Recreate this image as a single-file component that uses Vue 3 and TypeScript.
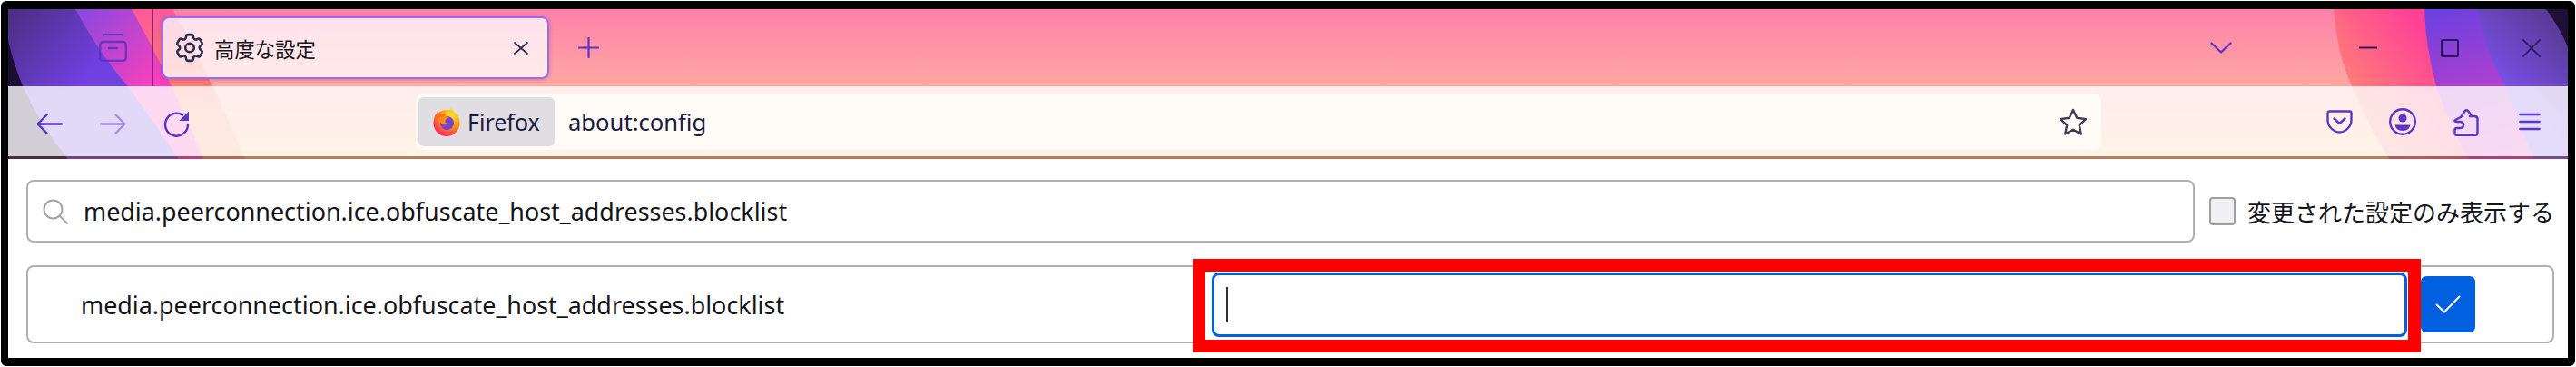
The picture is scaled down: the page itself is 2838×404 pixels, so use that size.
<script setup lang="ts">
// about:config Ansicht: Firefox-Fenster mit Theme-Hintergrund und rotem Markierungsrahmen
const prefName = 'media.peerconnection.ice.obfuscate_host_addresses.blocklist'

const gearPath =
  'M9.594 3.94c.09-.542.56-.94 1.11-.94h2.593c.55 0 1.02.398 1.11.94l.213 1.281c.063.374.313.686.645.87.074.04.147.083.22.127.325.196.72.257 1.075.124l1.217-.456a1.125 1.125 0 0 1 1.37.49l1.296 2.247a1.125 1.125 0 0 1-.26 1.431l-1.003.827c-.293.241-.438.613-.43.992a7.723 7.723 0 0 1 0 .255c-.008.378.137.75.43.991l1.004.827c.424.35.534.955.26 1.43l-1.298 2.247a1.125 1.125 0 0 1-1.369.491l-1.217-.456c-.355-.133-.75-.072-1.076.124a6.47 6.47 0 0 1-.22.128c-.331.183-.581.495-.644.869l-.213 1.281c-.09.543-.56.94-1.11.94h-2.594c-.55 0-1.019-.398-1.11-.94l-.213-1.281c-.062-.374-.312-.686-.644-.87a6.52 6.52 0 0 1-.22-.127c-.325-.196-.72-.257-1.076-.124l-1.217.456a1.125 1.125 0 0 1-1.369-.49l-1.297-2.247a1.125 1.125 0 0 1 .26-1.431l1.004-.827c.292-.24.437-.613.43-.991a6.932 6.932 0 0 1 0-.255c.007-.38-.138-.751-.43-.992l-1.004-.827a1.125 1.125 0 0 1-.26-1.43l1.297-2.247a1.125 1.125 0 0 1 1.37-.491l1.216.456c.356.133.751.072 1.076-.124.072-.044.146-.086.22-.128.332-.183.582-.495.644-.869l.214-1.28Z'
</script>

<template>
  <div class="frame">
    <header class="chrome">
      <!-- Theme-Hintergrund -->
      <svg class="theme" viewBox="9 10 2820 165" preserveAspectRatio="none" aria-hidden="true">
        <defs>
          <linearGradient id="base" x1="0" y1="0" x2="0" y2="1">
            <stop offset="0" stop-color="#ff80ab" />
            <stop offset="0.515" stop-color="#ffa8a0" />
            <stop offset="1" stop-color="#ffc382" />
          </linearGradient>
          <linearGradient id="l1" x1="0" y1="0" x2="0" y2="1">
            <stop offset="0" stop-color="#ff5a9a" />
            <stop offset="0.5" stop-color="#ff7a70" />
            <stop offset="1" stop-color="#ff9a70" />
          </linearGradient>
          <linearGradient id="l2" gradientUnits="userSpaceOnUse" x1="90" y1="10" x2="175" y2="90">
            <stop offset="0" stop-color="#8a48e0" />
            <stop offset="1" stop-color="#fa40bc" />
          </linearGradient>
          <linearGradient id="l3" gradientUnits="userSpaceOnUse" x1="9" y1="10" x2="95" y2="85">
            <stop offset="0" stop-color="#4a2e80" />
            <stop offset="1" stop-color="#7040e0" />
          </linearGradient>
          <linearGradient id="r1" gradientUnits="userSpaceOnUse" x1="2590" y1="95" x2="2670" y2="30">
            <stop offset="0" stop-color="#ff7c78" />
            <stop offset="1" stop-color="#ff4098" />
          </linearGradient>
          <linearGradient id="r2" gradientUnits="userSpaceOnUse" x1="2700" y1="10" x2="2745" y2="172">
            <stop offset="0" stop-color="#6e40e0" />
            <stop offset="1" stop-color="#e040c0" />
          </linearGradient>
          <linearGradient id="r3" gradientUnits="userSpaceOnUse" x1="2755" y1="95" x2="2829" y2="20">
            <stop offset="0" stop-color="#7a50e8" />
            <stop offset="1" stop-color="#54388c" />
          </linearGradient>
        </defs>
        <rect x="9" y="10" width="2820" height="165" fill="url(#base)" />
        <path d="M9 10H190Q235 90 270 175H9Z" fill="url(#l1)" />
        <path d="M9 10H145Q190 90 224 175H9Z" fill="url(#l2)" />
        <path d="M9 10H83Q110 60 141 95Q170 135 197 175H9Z" fill="url(#l3)" />
        <path d="M9 45Q15 70 25 95Q45 140 75 175H9Z" fill="#1a0e34" />
        <path d="M2571 10Q2575 60 2591 95Q2610 140 2632 175H2829V10Z" fill="url(#r1)" />
        <path d="M2671 10Q2672 50 2684 95Q2700 140 2720 175H2829V10Z" fill="url(#r2)" />
        <path d="M2730 10Q2735 50 2760 95Q2775 135 2792 175H2829V10Z" fill="url(#r3)" />
        <path d="M2805 10Q2820 30 2829 52V10Z" fill="#201038" />
      </svg>

      <!-- Tableiste -->
      <div class="tabbar">
        <svg class="firefox-view" width="31" height="31" viewBox="0 0 31 31" fill="none" stroke="#5430c0" stroke-width="2.4" stroke-linecap="round" stroke-linejoin="round">
          <path d="M5 1.5Q5 .8 7 .8H24Q26 .8 26 1.5" />
          <rect x="1.2" y="9" width="28.6" height="21" rx="3.5" />
          <path d="M11 16H20" />
        </svg>
        <span class="divider"></span>
        <div class="tab">
          <svg width="32" height="33" viewBox="2 2 20 20" fill="none" stroke="#2b2a50" stroke-width="1.6" stroke-linejoin="round">
            <path :d="gearPath" />
            <circle cx="12" cy="12" r="3" />
          </svg>
          <span class="tab-title">高度な設定</span>
          <svg class="tab-close" width="18" height="14" viewBox="0 0 18 14" fill="none" stroke="#2b2a50" stroke-width="1.8">
            <path d="M1.5 .5 16.5 13.5M16.5 .5 1.5 13.5" />
          </svg>
        </div>
        <svg class="new-tab" width="23" height="23" viewBox="0 0 23 23" fill="none" stroke="#5b35c8" stroke-width="2.2" stroke-linecap="round">
          <path d="M11.5 1V22M1 11.5H22" />
        </svg>
        <svg class="tab-list" width="24" height="13" viewBox="0 0 24 13" fill="none" stroke="#5b35c8" stroke-width="2.4" stroke-linecap="round" stroke-linejoin="round">
          <path d="M1.5 1.5 12 11.5 22.5 1.5" />
        </svg>
        <div class="win-controls">
          <svg width="20" height="20" viewBox="0 0 20 20" fill="none" stroke="#2a1858" stroke-width="2"><path d="M0 9.500H20" /></svg>
          <svg width="20" height="20" viewBox="0 0 20 20" fill="none" stroke="#2a1858" stroke-width="2"><rect x="1" y="1" width="18" height="18" rx="1" /></svg>
          <svg width="20" height="20" viewBox="0 0 20 20" fill="none" stroke="#2a1858" stroke-width="1.6"><path d="M.5 .5 19.5 19.5M19.5 .5 .5 19.5" /></svg>
        </div>
      </div>

      <!-- Navigationsleiste -->
      <div class="toolbar">
        <div class="nav-group nav-group--left">
          <button class="tool">
            <svg width="29" height="23" viewBox="0 0 29 23" fill="none" stroke="currentColor" stroke-width="2.4" stroke-linecap="round" stroke-linejoin="round"><path d="M28 11.5H2M11.5 1.5 1.5 11.5 11.5 21.5" /></svg>
          </button>
          <button class="tool tool--off">
            <svg width="29" height="23" viewBox="0 0 29 23" fill="none" stroke="currentColor" stroke-width="2.4" stroke-linecap="round" stroke-linejoin="round"><path d="M1 11.5H27M17.5 1.5 27.5 11.5 17.5 21.5" /></svg>
          </button>
          <button class="tool">
            <svg width="29" height="29" viewBox="0 0 29 29" fill="none" stroke="currentColor" stroke-width="2.4" stroke-linecap="round">
              <path d="M21 4.500A12.500 12.500 0 1 0 27 15" />
              <path d="M28 .5V11H17.500Z" fill="currentColor" stroke="none" />
            </svg>
          </button>
        </div>

        <div class="urlbar">
          <div class="identity">
            <svg width="32" height="32" viewBox="0 0 32 32">
              <defs>
                <radialGradient id="fxBody" cx="0.7" cy="0.2" r="0.95">
                  <stop offset="0" stop-color="#ffe226" />
                  <stop offset="0.45" stop-color="#ff980e" />
                  <stop offset="0.8" stop-color="#ff3750" />
                  <stop offset="1" stop-color="#f5156c" />
                </radialGradient>
                <linearGradient id="fxTip" x1="0" y1="0" x2="0" y2="1">
                  <stop offset="0" stop-color="#ffe226" />
                  <stop offset="1" stop-color="#ffb60e" />
                </linearGradient>
              </defs>
              <path d="M21 0C22 4 26 6 29 10L24 14H14C14 8 20 6 21 0Z" fill="url(#fxTip)" />
              <circle cx="16" cy="17.5" r="14.5" fill="url(#fxBody)" />
              <path d="M2 13C2.5 9.500 4.500 7 6 5.500C6.500 7 7.500 8 9 8.500C11 7.500 13 7 15 7.500L12 14Z" fill="#ff6a1e" />
              <circle cx="16.5" cy="17.5" r="7.5" fill="#6f42d8" />
              <path d="M7 13C10 9.500 16 9 20 11.500C17 11.500 14.500 13 14.500 15.500C14.500 17 16 18 18 17.500C16 20.500 11 20 9.500 17Z" fill="#ff8a1c" />
            </svg>
            <span class="identity-label">Firefox</span>
          </div>
          <span class="url">about:config</span>
          <svg class="star" width="32" height="31" viewBox="0 0 32 31" fill="none" stroke="#3e3a58" stroke-width="2.4" stroke-linejoin="round">
            <path d="M16 2 20.200 10.800 30 12.100 22.800 18.800 24.700 28.500 16 23.800 7.300 28.500 9.200 18.800 2 12.100 11.800 10.800Z" />
          </svg>
        </div>

        <div class="nav-group">
          <button class="tool">
            <svg width="29" height="26" viewBox="0 0 29 26" fill="none" stroke="currentColor" stroke-width="2.4" stroke-linecap="round" stroke-linejoin="round">
              <path d="M3.500 1.500H25.500Q27.500 1.500 27.500 3.500V11C27.500 19 20.500 24.500 14.500 24.500C8.500 24.500 1.500 19 1.500 11V3.500Q1.500 1.500 3.500 1.500Z" />
              <path d="M8.500 9.500 14.500 15 20.500 9.500" />
            </svg>
          </button>
          <button class="tool">
            <svg width="30" height="30" viewBox="0 0 30 30" fill="none" stroke="currentColor" stroke-width="2.4">
              <circle cx="15" cy="15" r="13.8" />
              <circle cx="15" cy="11" r="4.5" fill="currentColor" stroke="none" />
              <path d="M6.500 18.500H23.500Q22.500 25 15 25Q7.500 25 6.500 18.500Z" fill="currentColor" stroke="none" />
            </svg>
          </button>
          <button class="tool">
            <svg width="28" height="31" viewBox="0 0 28 31" fill="none" stroke="currentColor" stroke-width="2.4" stroke-linejoin="round">
              <path d="M8 10 12 4Q14 1 16 3L19 7Q20 9 18 9H23Q26.500 9 26.500 12V27Q26.500 30 23 30H4Q1.500 30 1.500 28V24Q1.500 22 4 22H7Q11 22 11 18.500Q11 15 7 15H4Q.5 15 2 13Z" />
            </svg>
          </button>
          <button class="tool">
            <svg width="24" height="20" viewBox="0 0 24 20" fill="none" stroke="currentColor" stroke-width="2.6" stroke-linecap="round"><path d="M1.500 2H22.500M1.500 10H22.500M1.500 18H22.500" /></svg>
          </button>
        </div>
      </div>
    </header>

    <main class="content">
      <div class="search-row">
        <label class="search">
          <svg width="28" height="28" viewBox="0 0 28 28" fill="none" stroke="#a3a3a3" stroke-width="2" stroke-linecap="round">
            <circle cx="11.5" cy="11.5" r="10" />
            <path d="M19 19 27 27" />
          </svg>
          <input class="search-input" type="text" :value="prefName" readonly />
        </label>
        <span class="checkbox"></span>
        <span class="checkbox-label">変更された設定のみ表示する</span>
      </div>

      <div class="pref-row">
        <span class="pref-name">{{ prefName }}</span>
        <div class="pref-edit"><span class="caret"></span></div>
        <button class="pref-save">
          <svg width="28" height="20" viewBox="0 0 28 20" fill="none" stroke="#fff" stroke-width="2" stroke-linecap="round" stroke-linejoin="round"><path d="M1.500 10.500 10 18.500 26.500 1.500" /></svg>
        </button>
        <!-- Markierung liegt über der Zeile -->
        <span class="marker"></span>
      </div>
    </main>
  </div>
</template>

<style>
html,
body {
  margin: 0;
  background: #fff;
}
</style>

<style scoped>
.frame {
  box-sizing: border-box;
  width: 2836px;
  height: 402px;
  margin: 1px 0 0 1px;
  border: solid #000;
  border-width: 9px 8px 9px 8px;
  border-radius: 6px;
  background: #fff;
  overflow: hidden;
  display: flex;
  flex-direction: column;
  font-family: "Noto Sans", "Noto Sans CJK JP", sans-serif;
  color: #15141a;
}

/* =====================================================================
   FENSTERKOPF
   ===================================================================== */
.chrome {
  position: relative;
  height: 165px;
  flex: none;
  background: #ffa8a0;
}
.theme {
  position: absolute;
  inset: 0;
  width: 100%;
  height: 100%;
}

.tabbar {
  position: relative;
  height: 85px;
  display: flex;
  align-items: center;
  padding-left: 100px;
  padding-right: 30px;
}
.firefox-view {
  opacity: 0.8;
  margin-top: -1px;
}
.divider {
  align-self: stretch;
  width: 1px;
  margin-left: 28px;
  background: #7a2a80;
}
.tab {
  box-sizing: border-box;
  display: flex;
  align-items: center;
  width: 427px;
  height: 69px;
  margin-left: 9px;
  padding: 0 20px 0 13px;
  border: 2px solid #9a6cf2;
  border-radius: 8px;
  background: rgba(255, 255, 255, 0.76);
  box-shadow: 0 1px 4px rgba(90, 40, 120, 0.3);
}
.tab-title {
  margin-left: 11px;
  font-size: 22.4px;
  font-family: "Noto Sans CJK JP", sans-serif;
}
.tab-close {
  margin-left: auto;
}
.new-tab {
  margin-left: 32px;
}
.tab-list {
  margin-left: auto;
}
.win-controls {
  display: flex;
  gap: 70px;
  margin-left: 140px;
}

.toolbar {
  box-sizing: border-box;
  position: relative;
  height: 80px;
  display: flex;
  align-items: center;
  padding: 1px 7px 0 10px;
  background: rgba(255, 255, 255, 0.8);
  border-bottom: 3px solid rgba(120, 70, 60, 0.55);
  background-clip: padding-box;
}
.nav-group {
  display: flex;
  flex: none;
}
.nav-group--left {
  margin-top: 4px;
}
.tool {
  display: flex;
  align-items: center;
  justify-content: center;
  width: 70px;
  height: 40px;
  padding: 0;
  border: 0;
  background: none;
  color: #5b35c8;
}
.tool--off {
  opacity: 0.45;
}
.urlbar {
  flex: 1;
  display: flex;
  align-items: center;
  height: 62px;
  margin: 0 227px 0 229px;
  padding: 0 15px 0 3px;
  border-radius: 8px;
  background: #fffcf8;
}
.identity {
  box-sizing: border-box;
  flex: none;
  width: 150px;
  display: flex;
  align-items: center;
  gap: 7px;
  height: 54px;
  padding-left: 15px;
  border-radius: 6px;
  background: #e0dde3;
}
.identity-label {
  font-size: 25px;
  color: #1d1b41;
}
.url {
  margin-left: 15px;
  font-size: 25.6px;
  color: #1d1b41;
}
.star {
  margin-left: auto;
}

/* =====================================================================
   INHALT
   ===================================================================== */
.content {
  flex: 1;
  display: flex;
  flex-direction: column;
  gap: 25px;
  padding: 23px 15px 0 20px;
  font-size: 26.9px;
}
.search-row {
  display: flex;
  align-items: center;
  height: 69px;
}
.search {
  box-sizing: border-box;
  flex: none;
  width: 2389px;
  height: 69px;
  display: flex;
  align-items: center;
  gap: 17px;
  padding: 0 16px;
  border: 2px solid #b1b1b3;
  border-radius: 8px;
}
.search-input {
  flex: 1;
  padding: 0;
  border: 0;
  outline: 0;
  background: none;
  font: inherit;
  color: inherit;
}
.checkbox {
  box-sizing: border-box;
  width: 31px;
  height: 31px;
  margin-left: 16px;
  border: 2px solid #9f9fa3;
  border-radius: 4px;
  background: #f0f0f4;
}
.checkbox-label {
  margin-left: 13px;
  font-size: 26px;
  font-family: "Noto Sans CJK JP", sans-serif;
  white-space: nowrap;
}

.pref-row {
  box-sizing: border-box;
  position: relative;
  height: 86px;
  display: flex;
  align-items: center;
  border: 2px solid #b1b1b3;
  border-radius: 8px;
}
.pref-name {
  box-sizing: border-box;
  flex: 0 0 1304px;
  padding-left: 58px;
}
.pref-edit {
  box-sizing: border-box;
  width: 1317px;
  height: 71px;
  display: flex;
  align-items: center;
  padding-left: 13px;
  border: 3px solid #0060df;
  border-radius: 8px;
}
.caret {
  width: 2px;
  height: 39px;
  background: #333;
}
.pref-save {
  display: flex;
  align-items: center;
  justify-content: center;
  width: 60px;
  height: 62px;
  margin-left: 15px;
  padding: 0;
  border: 0;
  border-radius: 6px;
  background: #0060df;
}
.marker {
  box-sizing: border-box;
  position: absolute;
  top: -9px;
  left: 1283px;
  width: 1353px;
  height: 103px;
  border: 14px solid #f00;
}
</style>
